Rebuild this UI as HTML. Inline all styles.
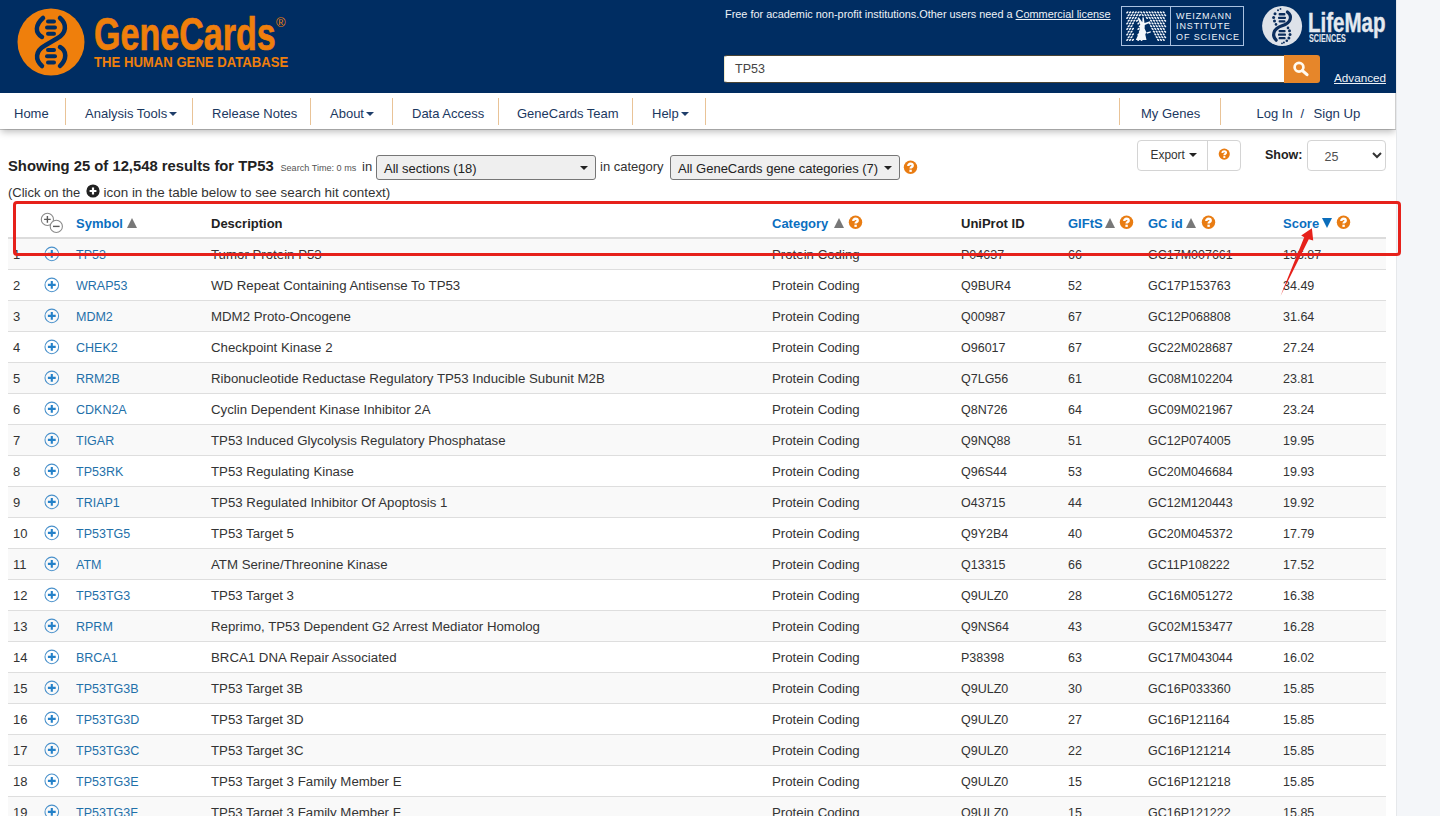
<!DOCTYPE html>
<html><head><meta charset="utf-8">
<style>
*{margin:0;padding:0;box-sizing:border-box}
html,body{width:1440px;height:816px;overflow:hidden;background:#f4f6f9;font-family:"Liberation Sans",sans-serif;color:#333}
.abs{position:absolute}
#page{position:absolute;left:0;top:0;width:1397px;height:816px;background:#fff;border-right:1px solid #e6e8eb;overflow:hidden}
#hdr{position:absolute;left:0;top:0;width:1396px;height:93px;background:#002d62}
.t{position:absolute;white-space:pre;line-height:1}
#nav{position:absolute;left:0;top:93px;width:1396px;height:36px;background:#fff;border-right:1px solid #cfcfcf;box-shadow:0 1px 0 rgba(0,0,0,.2),0 4px 7px -1px rgba(0,0,0,.26)}
.nv{position:absolute;font-size:13px;color:#1b385f;white-space:pre;line-height:1;top:14px}
.sep{position:absolute;top:5px;width:1px;height:27px;background:#e9c397}
.caret{display:inline-block;width:0;height:0;border-left:4px solid transparent;border-right:4px solid transparent;border-top:4px solid #1f3e6a;vertical-align:middle;margin-left:2px;position:relative;top:-1px}
.sel{position:absolute;background:#efefef;border:1px solid #767676;border-radius:3px}
.help{position:absolute;width:13px;height:13px;border-radius:50%;background:#e8831f}
.row{position:absolute;left:8px;width:1378px;height:31px;border-bottom:1px solid #dedede}
.row.odd{background:#f9f9f9}
.c{position:absolute;font-size:13px;white-space:pre;line-height:1;top:9px;color:#333}
.lnk{color:#1f70a9}
.d{font-size:13.25px;top:9.2px}
.n{font-size:12.5px;top:10px}
.th{position:absolute;font-size:13px;font-weight:bold;white-space:pre;line-height:1;top:217px;color:#222}
.thl{color:#0b6fbf}
.pl{position:absolute;left:36px;top:7px}
.tri{position:absolute;width:0;height:0;border-left:5.8px solid transparent;border-right:5.8px solid transparent}
</style></head><body>
<svg width="0" height="0" style="position:absolute"><defs>
<symbol id="help" viewBox="0 0 15 15"><circle cx="7.5" cy="7.3" r="6.7" fill="#e97c12"/><path d="M5.3 5.9C5.3 4.5 6.3 3.8 7.5 3.8C8.8 3.8 9.7 4.5 9.7 5.7C9.7 7.1 7.6 7.1 7.6 8.6" fill="none" stroke="#fff" stroke-width="2.4"/><rect x="6.4" y="9.7" width="2.4" height="2.2" fill="#fff"/></symbol>
<symbol id="plus" viewBox="0 0 16 16"><circle cx="7.8" cy="7.9" r="6.8" fill="none" stroke="#4a91cb" stroke-width="1.05"/><path d="M7.8 4V11.8M3.9 7.9H11.7" stroke="#2481c9" stroke-width="2.1"/></symbol>
</defs></svg>
<div id="page">
  <div id="hdr">
    <!-- GeneCards logo -->
    <svg class="abs" style="left:0;top:0" width="300" height="92">
      <circle cx="51" cy="42" r="33.5" fill="#ef7f0c"/>
      <g fill="none" stroke="#002d62" stroke-width="4.5" stroke-linecap="round">
        <path d="M60 18 C 67 24, 67 33, 57 38.5 L 45 45.5 C 35 51, 35 60, 42 66"/>
        <path d="M43 18 C 35 25, 35 33, 42 37"/>
        <path d="M60 47 C 67 51, 67 59, 60 66"/>
      </g>
      <g fill="#002d62">
        <rect x="46" y="19.5" width="10" height="4" rx="2"/>
        <rect x="45" y="25.6" width="12" height="4" rx="2"/>
        <rect x="46" y="31.8" width="10" height="4" rx="2"/>
        <rect x="46" y="48" width="10" height="4" rx="2"/>
        <rect x="45" y="54.2" width="12" height="4" rx="2"/>
        <rect x="46" y="60.5" width="10" height="4" rx="2"/>
      </g>
    </svg>
    <div class="t" style="left:94px;top:10px;font-size:47px;font-weight:bold;color:#ef7f0c;transform:scaleX(0.725);transform-origin:0 0;-webkit-text-stroke:0.7px #ef7f0c">GeneCards</div>
    <div class="t" style="left:276px;top:16px;font-size:13px;color:#ef7f0c">®</div>
    <div class="t" style="left:94px;top:54px;font-size:15.5px;font-weight:bold;color:#ef7f0c;transform:scaleX(0.847);transform-origin:0 0">THE HUMAN GENE DATABASE</div>

    <div class="t" style="left:725px;top:9px;font-size:10.9px;color:#eef2f7">Free for academic non-profit institutions.Other users need a <u>Commercial license</u></div>

    <!-- Weizmann -->
    <svg class="abs" style="left:1122px;top:7px" width="48" height="38"><g fill="#f4f7fb"><ellipse cx="5.3" cy="5.3" rx="1.35" ry="0.8" transform="rotate(-40 5.3 5.3)"/><ellipse cx="8.1" cy="5.3" rx="1.35" ry="0.8" transform="rotate(-40 8.1 5.3)"/><ellipse cx="10.9" cy="5.3" rx="1.35" ry="0.8" transform="rotate(-40 10.9 5.3)"/><ellipse cx="13.7" cy="5.3" rx="1.35" ry="0.8" transform="rotate(-40 13.7 5.3)"/><ellipse cx="16.5" cy="5.3" rx="1.35" ry="0.8" transform="rotate(-40 16.5 5.3)"/><ellipse cx="19.3" cy="5.3" rx="1.35" ry="0.8" transform="rotate(40 19.3 5.3)"/><ellipse cx="22.1" cy="5.3" rx="1.35" ry="0.8" transform="rotate(40 22.1 5.3)"/><ellipse cx="24.9" cy="5.3" rx="1.35" ry="0.8" transform="rotate(40 24.9 5.3)"/><ellipse cx="27.7" cy="5.3" rx="1.35" ry="0.8" transform="rotate(40 27.7 5.3)"/><ellipse cx="30.5" cy="5.3" rx="1.35" ry="0.8" transform="rotate(40 30.5 5.3)"/><ellipse cx="33.3" cy="5.3" rx="1.35" ry="0.8" transform="rotate(40 33.3 5.3)"/><ellipse cx="36.1" cy="5.3" rx="1.35" ry="0.8" transform="rotate(40 36.1 5.3)"/><ellipse cx="38.9" cy="5.3" rx="1.35" ry="0.8" transform="rotate(40 38.9 5.3)"/><ellipse cx="41.7" cy="5.3" rx="1.35" ry="0.8" transform="rotate(40 41.7 5.3)"/><ellipse cx="6.7" cy="8.1" rx="1.35" ry="0.8" transform="rotate(-40 6.7 8.1)"/><ellipse cx="9.5" cy="8.1" rx="1.35" ry="0.8" transform="rotate(-40 9.5 8.1)"/><ellipse cx="12.3" cy="8.1" rx="1.35" ry="0.8" transform="rotate(-40 12.3 8.1)"/><ellipse cx="15.1" cy="8.1" rx="1.35" ry="0.8" transform="rotate(-40 15.1 8.1)"/><ellipse cx="17.9" cy="8.1" rx="1.35" ry="0.8" transform="rotate(-40 17.9 8.1)"/><ellipse cx="20.7" cy="8.1" rx="1.35" ry="0.8" transform="rotate(40 20.7 8.1)"/><ellipse cx="23.5" cy="8.1" rx="1.35" ry="0.8" transform="rotate(40 23.5 8.1)"/><ellipse cx="26.3" cy="8.1" rx="1.35" ry="0.8" transform="rotate(40 26.3 8.1)"/><ellipse cx="29.1" cy="8.1" rx="1.35" ry="0.8" transform="rotate(40 29.1 8.1)"/><ellipse cx="31.9" cy="8.1" rx="1.35" ry="0.8" transform="rotate(40 31.9 8.1)"/><ellipse cx="34.7" cy="8.1" rx="1.35" ry="0.8" transform="rotate(40 34.7 8.1)"/><ellipse cx="37.5" cy="8.1" rx="1.35" ry="0.8" transform="rotate(40 37.5 8.1)"/><ellipse cx="40.3" cy="8.1" rx="1.35" ry="0.8" transform="rotate(40 40.3 8.1)"/><ellipse cx="43.1" cy="8.1" rx="1.35" ry="0.8" transform="rotate(40 43.1 8.1)"/><ellipse cx="5.3" cy="10.8" rx="1.35" ry="0.8" transform="rotate(-40 5.3 10.8)"/><ellipse cx="8.1" cy="10.8" rx="1.35" ry="0.8" transform="rotate(-40 8.1 10.8)"/><ellipse cx="10.9" cy="10.8" rx="1.35" ry="0.8" transform="rotate(-40 10.9 10.8)"/><ellipse cx="13.7" cy="10.8" rx="1.35" ry="0.8" transform="rotate(-40 13.7 10.8)"/><ellipse cx="24.9" cy="10.8" rx="1.35" ry="0.8" transform="rotate(40 24.9 10.8)"/><ellipse cx="27.7" cy="10.8" rx="1.35" ry="0.8" transform="rotate(40 27.7 10.8)"/><ellipse cx="30.5" cy="10.8" rx="1.35" ry="0.8" transform="rotate(40 30.5 10.8)"/><ellipse cx="33.3" cy="10.8" rx="1.35" ry="0.8" transform="rotate(40 33.3 10.8)"/><ellipse cx="36.1" cy="10.8" rx="1.35" ry="0.8" transform="rotate(40 36.1 10.8)"/><ellipse cx="38.9" cy="10.8" rx="1.35" ry="0.8" transform="rotate(40 38.9 10.8)"/><ellipse cx="41.7" cy="10.8" rx="1.35" ry="0.8" transform="rotate(40 41.7 10.8)"/><ellipse cx="6.7" cy="13.6" rx="1.35" ry="0.8" transform="rotate(-40 6.7 13.6)"/><ellipse cx="9.5" cy="13.6" rx="1.35" ry="0.8" transform="rotate(-40 9.5 13.6)"/><ellipse cx="12.3" cy="13.6" rx="1.35" ry="0.8" transform="rotate(-40 12.3 13.6)"/><ellipse cx="15.1" cy="13.6" rx="1.35" ry="0.8" transform="rotate(-40 15.1 13.6)"/><ellipse cx="29.1" cy="13.6" rx="1.35" ry="0.8" transform="rotate(40 29.1 13.6)"/><ellipse cx="31.9" cy="13.6" rx="1.35" ry="0.8" transform="rotate(40 31.9 13.6)"/><ellipse cx="34.7" cy="13.6" rx="1.35" ry="0.8" transform="rotate(40 34.7 13.6)"/><ellipse cx="37.5" cy="13.6" rx="1.35" ry="0.8" transform="rotate(40 37.5 13.6)"/><ellipse cx="40.3" cy="13.6" rx="1.35" ry="0.8" transform="rotate(40 40.3 13.6)"/><ellipse cx="43.1" cy="13.6" rx="1.35" ry="0.8" transform="rotate(40 43.1 13.6)"/><ellipse cx="5.3" cy="16.3" rx="1.35" ry="0.8" transform="rotate(-40 5.3 16.3)"/><ellipse cx="8.1" cy="16.3" rx="1.35" ry="0.8" transform="rotate(-40 8.1 16.3)"/><ellipse cx="10.9" cy="16.3" rx="1.35" ry="0.8" transform="rotate(-40 10.9 16.3)"/><ellipse cx="16.5" cy="16.3" rx="1.35" ry="0.8" transform="rotate(-40 16.5 16.3)"/><ellipse cx="19.3" cy="16.3" rx="1.35" ry="0.8" transform="rotate(40 19.3 16.3)"/><ellipse cx="27.7" cy="16.3" rx="1.35" ry="0.8" transform="rotate(40 27.7 16.3)"/><ellipse cx="30.5" cy="16.3" rx="1.35" ry="0.8" transform="rotate(40 30.5 16.3)"/><ellipse cx="33.3" cy="16.3" rx="1.35" ry="0.8" transform="rotate(40 33.3 16.3)"/><ellipse cx="36.1" cy="16.3" rx="1.35" ry="0.8" transform="rotate(40 36.1 16.3)"/><ellipse cx="38.9" cy="16.3" rx="1.35" ry="0.8" transform="rotate(40 38.9 16.3)"/><ellipse cx="41.7" cy="16.3" rx="1.35" ry="0.8" transform="rotate(40 41.7 16.3)"/><ellipse cx="6.7" cy="19.1" rx="1.35" ry="0.8" transform="rotate(-40 6.7 19.1)"/><ellipse cx="9.5" cy="19.1" rx="1.35" ry="0.8" transform="rotate(-40 9.5 19.1)"/><ellipse cx="17.9" cy="19.1" rx="1.35" ry="0.8" transform="rotate(-40 17.9 19.1)"/><ellipse cx="20.7" cy="19.1" rx="1.35" ry="0.8" transform="rotate(40 20.7 19.1)"/><ellipse cx="29.1" cy="19.1" rx="1.35" ry="0.8" transform="rotate(40 29.1 19.1)"/><ellipse cx="31.9" cy="19.1" rx="1.35" ry="0.8" transform="rotate(40 31.9 19.1)"/><ellipse cx="34.7" cy="19.1" rx="1.35" ry="0.8" transform="rotate(40 34.7 19.1)"/><ellipse cx="37.5" cy="19.1" rx="1.35" ry="0.8" transform="rotate(40 37.5 19.1)"/><ellipse cx="40.3" cy="19.1" rx="1.35" ry="0.8" transform="rotate(40 40.3 19.1)"/><ellipse cx="43.1" cy="19.1" rx="1.35" ry="0.8" transform="rotate(40 43.1 19.1)"/><ellipse cx="5.3" cy="21.8" rx="1.35" ry="0.8" transform="rotate(-40 5.3 21.8)"/><ellipse cx="8.1" cy="21.8" rx="1.35" ry="0.8" transform="rotate(-40 8.1 21.8)"/><ellipse cx="10.9" cy="21.8" rx="1.35" ry="0.8" transform="rotate(-40 10.9 21.8)"/><ellipse cx="16.5" cy="21.8" rx="1.35" ry="0.8" transform="rotate(-40 16.5 21.8)"/><ellipse cx="19.3" cy="21.8" rx="1.35" ry="0.8" transform="rotate(40 19.3 21.8)"/><ellipse cx="30.5" cy="21.8" rx="1.35" ry="0.8" transform="rotate(40 30.5 21.8)"/><ellipse cx="33.3" cy="21.8" rx="1.35" ry="0.8" transform="rotate(40 33.3 21.8)"/><ellipse cx="36.1" cy="21.8" rx="1.35" ry="0.8" transform="rotate(40 36.1 21.8)"/><ellipse cx="38.9" cy="21.8" rx="1.35" ry="0.8" transform="rotate(40 38.9 21.8)"/><ellipse cx="41.7" cy="21.8" rx="1.35" ry="0.8" transform="rotate(40 41.7 21.8)"/><ellipse cx="6.7" cy="24.6" rx="1.35" ry="0.8" transform="rotate(-40 6.7 24.6)"/><ellipse cx="9.5" cy="24.6" rx="1.35" ry="0.8" transform="rotate(-40 9.5 24.6)"/><ellipse cx="17.9" cy="24.6" rx="1.35" ry="0.8" transform="rotate(-40 17.9 24.6)"/><ellipse cx="20.7" cy="24.6" rx="1.35" ry="0.8" transform="rotate(40 20.7 24.6)"/><ellipse cx="31.9" cy="24.6" rx="1.35" ry="0.8" transform="rotate(40 31.9 24.6)"/><ellipse cx="34.7" cy="24.6" rx="1.35" ry="0.8" transform="rotate(40 34.7 24.6)"/><ellipse cx="37.5" cy="24.6" rx="1.35" ry="0.8" transform="rotate(40 37.5 24.6)"/><ellipse cx="40.3" cy="24.6" rx="1.35" ry="0.8" transform="rotate(40 40.3 24.6)"/><ellipse cx="43.1" cy="24.6" rx="1.35" ry="0.8" transform="rotate(40 43.1 24.6)"/><ellipse cx="5.3" cy="27.3" rx="1.35" ry="0.8" transform="rotate(-40 5.3 27.3)"/><ellipse cx="8.1" cy="27.3" rx="1.35" ry="0.8" transform="rotate(-40 8.1 27.3)"/><ellipse cx="10.9" cy="27.3" rx="1.35" ry="0.8" transform="rotate(-40 10.9 27.3)"/><ellipse cx="16.5" cy="27.3" rx="1.35" ry="0.8" transform="rotate(-40 16.5 27.3)"/><ellipse cx="19.3" cy="27.3" rx="1.35" ry="0.8" transform="rotate(40 19.3 27.3)"/><ellipse cx="33.3" cy="27.3" rx="1.35" ry="0.8" transform="rotate(40 33.3 27.3)"/><ellipse cx="36.1" cy="27.3" rx="1.35" ry="0.8" transform="rotate(40 36.1 27.3)"/><ellipse cx="38.9" cy="27.3" rx="1.35" ry="0.8" transform="rotate(40 38.9 27.3)"/><ellipse cx="41.7" cy="27.3" rx="1.35" ry="0.8" transform="rotate(40 41.7 27.3)"/><ellipse cx="6.7" cy="30.1" rx="1.35" ry="0.8" transform="rotate(-40 6.7 30.1)"/><ellipse cx="9.5" cy="30.1" rx="1.35" ry="0.8" transform="rotate(-40 9.5 30.1)"/><ellipse cx="17.9" cy="30.1" rx="1.35" ry="0.8" transform="rotate(-40 17.9 30.1)"/><ellipse cx="20.7" cy="30.1" rx="1.35" ry="0.8" transform="rotate(40 20.7 30.1)"/><ellipse cx="34.7" cy="30.1" rx="1.35" ry="0.8" transform="rotate(40 34.7 30.1)"/><ellipse cx="37.5" cy="30.1" rx="1.35" ry="0.8" transform="rotate(40 37.5 30.1)"/><ellipse cx="40.3" cy="30.1" rx="1.35" ry="0.8" transform="rotate(40 40.3 30.1)"/><ellipse cx="43.1" cy="30.1" rx="1.35" ry="0.8" transform="rotate(40 43.1 30.1)"/><ellipse cx="5.3" cy="32.8" rx="1.35" ry="0.8" transform="rotate(-40 5.3 32.8)"/><ellipse cx="8.1" cy="32.8" rx="1.35" ry="0.8" transform="rotate(-40 8.1 32.8)"/><ellipse cx="10.9" cy="32.8" rx="1.35" ry="0.8" transform="rotate(-40 10.9 32.8)"/><ellipse cx="16.5" cy="32.8" rx="1.35" ry="0.8" transform="rotate(-40 16.5 32.8)"/><ellipse cx="19.3" cy="32.8" rx="1.35" ry="0.8" transform="rotate(40 19.3 32.8)"/><ellipse cx="36.1" cy="32.8" rx="1.35" ry="0.8" transform="rotate(40 36.1 32.8)"/><ellipse cx="38.9" cy="32.8" rx="1.35" ry="0.8" transform="rotate(40 38.9 32.8)"/><ellipse cx="41.7" cy="32.8" rx="1.35" ry="0.8" transform="rotate(40 41.7 32.8)"/><path d="M13.8 33 L24.5 33 L23.3 27.5 L24.2 25.6 L28.8 24.2 L28.8 25.6 L25 26.8 L22.6 21.5 L22.8 18 L28.5 15.6 L28 14.3 L22.5 16 L21.8 10.5 L20.5 10.2 L20.3 15.2 L16.8 10.3 L15.6 11 L18.2 17.5 L17.2 25.5 Z"/></g></svg>
    <div class="abs" style="left:1121px;top:6px;width:123px;height:40px;border:1px solid #a9c1e0"></div>
    <div class="abs" style="left:1170px;top:6px;width:1px;height:40px;background:#a9c1e0"></div>
    <div class="t" style="left:1176px;top:10.5px;font-size:9px;color:#eef3fa;letter-spacing:0.9px;line-height:10.5px">WEIZMANN<br>INSTITUTE<br>OF SCIENCE</div>

    <!-- LifeMap -->
    <svg class="abs" style="left:1258px;top:2px" width="48" height="48">
      <circle cx="24.1" cy="24.1" r="20" fill="#dde2e9"/>
      <path d="M29.4 10 C 34.5 14, 33.5 20.5, 24 23.8 C 14.5 27, 14 34, 18.2 38.2" fill="none" stroke="#0b2d5c" stroke-width="3.2" stroke-linecap="round"/>
      <g fill="#0b2d5c">
        <circle cx="17" cy="11.8" r="1.50"/><circle cx="15.6" cy="15.6" r="1.50"/><circle cx="16.5" cy="19.1" r="1.50"/><circle cx="18" cy="22.4" r="1.30"/>
        <circle cx="20" cy="8.2" r="1.00"/><circle cx="22.5" cy="6.9" r="0.90"/>
        <circle cx="30" cy="25.9" r="1.30"/><circle cx="31.5" cy="28.8" r="1.50"/><circle cx="32" cy="32.4" r="1.50"/><circle cx="30.9" cy="35.9" r="1.50"/><circle cx="28.8" cy="38.8" r="1.30"/>
        <circle cx="25.9" cy="40.6" r="1.00"/><circle cx="24" cy="41.3" r="0.90"/>
        <rect x="20.6" y="11.1" width="6.8" height="2.3" rx="0.9"/><rect x="20" y="14.7" width="8" height="2.3" rx="0.9"/><rect x="20.6" y="18.2" width="6.8" height="2.3" rx="0.9"/>
        <rect x="20.6" y="27.9" width="7" height="2.3" rx="0.9"/><rect x="20" y="31.5" width="8" height="2.3" rx="0.9"/><rect x="20.6" y="35" width="7" height="2.3" rx="0.9"/>
      </g>
    </svg>
    <div class="t" style="left:1308px;top:10px;font-size:27px;font-weight:bold;color:#e4e9f0;transform:scaleX(0.76);transform-origin:0 0;-webkit-text-stroke:0.4px #e4e9f0">LifeMap</div>
    <div class="t" style="left:1309px;top:34px;font-size:10px;font-weight:bold;color:#e4e9f0;transform:scaleX(0.72);transform-origin:0 0">SCIENCES</div>

    <!-- search -->
    <div class="abs" style="left:724px;top:55px;width:561px;height:28px;background:#fff;border-radius:3px 0 0 3px;border:1px solid #4a4434;border-left-color:#f3e9c6;border-right:0"></div>
    <div class="t" style="left:735px;top:63px;font-size:12.5px;color:#444">TP53</div>
    <div class="abs" style="left:1284px;top:55px;width:36px;height:28px;background:#e6862a;border-radius:0 3px 3px 0"></div>
    <svg class="abs" style="left:1284px;top:55px" width="36" height="28"><circle cx="15" cy="12.2" r="4.4" fill="none" stroke="#fffaf0" stroke-width="2.7"/><path d="M18.4 15.6L23 19.6" stroke="#fffaf0" stroke-width="3.2" stroke-linecap="round"/></svg>
    <div class="t" style="left:1334px;top:72px;font-size:11.7px;color:#eef2f7"><u>Advanced</u></div>
  </div>


  <!-- results line -->
  <div class="t" style="left:8px;top:159px;font-size:14.8px;font-weight:bold;color:#222">Showing 25 of 12,548 results for TP53</div>
  <div class="t" style="left:280.5px;top:164px;font-size:9.1px;color:#555">Search Time: 0 ms</div>
  <div class="t" style="left:362px;top:160px;font-size:13px;color:#333">in</div>
  <div class="sel" style="left:376px;top:155px;width:220px;height:25px"></div>
  <div class="t" style="left:384px;top:162px;font-size:13px;color:#222">All sections (18)</div>
  <div class="tri" style="left:580px;top:166px;border-left-width:4px;border-right-width:4px;border-top:4px solid #222"></div>
  <div class="t" style="left:600px;top:160px;font-size:13px;color:#333">in category</div>
  <div class="sel" style="left:670px;top:155px;width:230px;height:25px"></div>
  <div class="t" style="left:678px;top:162px;font-size:13px;color:#222">All GeneCards gene categories (7)</div>
  <div class="tri" style="left:884px;top:166px;border-left-width:4px;border-right-width:4px;border-top:4px solid #222"></div>
  <svg class="abs" style="left:903px;top:160px" width="15" height="15"><use href="#help"/></svg>
  <div class="t" style="left:8px;top:186px;font-size:13px;color:#333">(Click on the</div><div class="t" style="left:103.5px;top:186px;font-size:13.45px;color:#333">icon in the table below to see search hit context)</div>
  <svg class="abs" style="left:86px;top:184px" width="14" height="14"><circle cx="7" cy="7" r="6.6" fill="#222"/><path d="M7 3.6V10.4M3.6 7H10.4" stroke="#fff" stroke-width="2.2"/></svg>

  <!-- export / show -->
  <div class="abs" style="left:1137px;top:140px;width:104px;height:31px;border:1px solid #d4d4d4;border-radius:4px;background:#fff"></div>
  <div class="abs" style="left:1207px;top:140px;width:1px;height:31px;background:#d4d4d4"></div>
  <div class="t" style="left:1150.5px;top:150px;font-size:11.9px;color:#333">Export<span class="caret" style="border-top-color:#222;margin-left:4px"></span></div>
  <svg class="abs" style="left:1218px;top:148px" width="12.5" height="12.5"><use href="#help"/></svg>
  <div class="t" style="left:1265px;top:149px;font-size:12.5px;font-weight:bold;color:#222">Show:</div>
  <div class="abs" style="left:1307px;top:140px;width:79px;height:31px;border:1px solid #d4d4d4;border-radius:4px;background:#fff"></div>
  <div class="t" style="left:1324.5px;top:151px;font-size:12.5px;color:#505050">25</div>
  <svg class="abs" style="left:1371px;top:150px" width="12" height="10"><path d="M2 3L6 7L10 3" fill="none" stroke="#333" stroke-width="2"/></svg>

  <!-- table header -->
  <svg class="abs" style="left:38px;top:210px" width="28" height="24">
    <circle cx="9.4" cy="9.4" r="6.1" fill="none" stroke="#8a8a8a" stroke-width="1.1"/>
    <path d="M6.1 9.4H12.7M9.4 6.1V12.7" stroke="#5a5a5a" stroke-width="1.4"/>
    <circle cx="18.3" cy="16.4" r="6.1" fill="#fff" stroke="#8a8a8a" stroke-width="1.1"/>
    <path d="M15 16.4H21.6" stroke="#5a5a5a" stroke-width="1.4"/>
  </svg>
  <div class="th thl" style="left:76px">Symbol</div>
  <div class="tri" style="left:127px;top:218px;border-bottom:10px solid #787878"></div>
  <div class="th" style="left:211px">Description</div>
  <div class="th thl" style="left:772px">Category</div>
  <div class="tri" style="left:834px;top:218px;border-bottom:10px solid #787878"></div>
  <svg class="abs" style="left:848px;top:215px" width="15" height="15"><use href="#help"/></svg>
  <div class="th" style="left:961px">UniProt ID</div>
  <div class="th thl" style="left:1068px">GIFtS</div>
  <div class="tri" style="left:1105px;top:218px;border-bottom:10px solid #787878"></div>
  <svg class="abs" style="left:1119px;top:215px" width="15" height="15"><use href="#help"/></svg>
  <div class="th thl" style="left:1148px">GC id</div>
  <div class="tri" style="left:1186px;top:218px;border-bottom:10px solid #787878"></div>
  <svg class="abs" style="left:1201px;top:215px" width="15" height="15"><use href="#help"/></svg>
  <div class="th thl" style="left:1283px">Score</div>
  <div class="tri" style="left:1322px;top:218px;border-top:10px solid #0b6dbb"></div>
  <svg class="abs" style="left:1336px;top:215px" width="15" height="15"><use href="#help"/></svg>
  <div class="abs" style="left:8px;top:237px;width:1378px;height:2px;background:#dcdcdc"></div>

  <!-- rows -->
<div class="row odd" style="top:239px"><div class="c" style="left:5px">1</div><svg class="pl" width="16" height="16"><use href="#plus"/></svg><div class="c n lnk" style="left:68px">TP53</div><div class="c d" style="left:203px">Tumor Protein P53</div><div class="c d" style="left:764px">Protein Coding</div><div class="c n" style="left:953px">P04637</div><div class="c n" style="left:1060px">66</div><div class="c n" style="left:1140px">GC17M007661</div><div class="c n" style="left:1275px">136.87</div></div>
<div class="row" style="top:270px"><div class="c" style="left:5px">2</div><svg class="pl" width="16" height="16"><use href="#plus"/></svg><div class="c n lnk" style="left:68px">WRAP53</div><div class="c d" style="left:203px">WD Repeat Containing Antisense To TP53</div><div class="c d" style="left:764px">Protein Coding</div><div class="c n" style="left:953px">Q9BUR4</div><div class="c n" style="left:1060px">52</div><div class="c n" style="left:1140px">GC17P153763</div><div class="c n" style="left:1275px">34.49</div></div>
<div class="row odd" style="top:301px"><div class="c" style="left:5px">3</div><svg class="pl" width="16" height="16"><use href="#plus"/></svg><div class="c n lnk" style="left:68px">MDM2</div><div class="c d" style="left:203px">MDM2 Proto-Oncogene</div><div class="c d" style="left:764px">Protein Coding</div><div class="c n" style="left:953px">Q00987</div><div class="c n" style="left:1060px">67</div><div class="c n" style="left:1140px">GC12P068808</div><div class="c n" style="left:1275px">31.64</div></div>
<div class="row" style="top:332px"><div class="c" style="left:5px">4</div><svg class="pl" width="16" height="16"><use href="#plus"/></svg><div class="c n lnk" style="left:68px">CHEK2</div><div class="c d" style="left:203px">Checkpoint Kinase 2</div><div class="c d" style="left:764px">Protein Coding</div><div class="c n" style="left:953px">O96017</div><div class="c n" style="left:1060px">67</div><div class="c n" style="left:1140px">GC22M028687</div><div class="c n" style="left:1275px">27.24</div></div>
<div class="row odd" style="top:363px"><div class="c" style="left:5px">5</div><svg class="pl" width="16" height="16"><use href="#plus"/></svg><div class="c n lnk" style="left:68px">RRM2B</div><div class="c d" style="left:203px">Ribonucleotide Reductase Regulatory TP53 Inducible Subunit M2B</div><div class="c d" style="left:764px">Protein Coding</div><div class="c n" style="left:953px">Q7LG56</div><div class="c n" style="left:1060px">61</div><div class="c n" style="left:1140px">GC08M102204</div><div class="c n" style="left:1275px">23.81</div></div>
<div class="row" style="top:394px"><div class="c" style="left:5px">6</div><svg class="pl" width="16" height="16"><use href="#plus"/></svg><div class="c n lnk" style="left:68px">CDKN2A</div><div class="c d" style="left:203px">Cyclin Dependent Kinase Inhibitor 2A</div><div class="c d" style="left:764px">Protein Coding</div><div class="c n" style="left:953px">Q8N726</div><div class="c n" style="left:1060px">64</div><div class="c n" style="left:1140px">GC09M021967</div><div class="c n" style="left:1275px">23.24</div></div>
<div class="row odd" style="top:425px"><div class="c" style="left:5px">7</div><svg class="pl" width="16" height="16"><use href="#plus"/></svg><div class="c n lnk" style="left:68px">TIGAR</div><div class="c d" style="left:203px">TP53 Induced Glycolysis Regulatory Phosphatase</div><div class="c d" style="left:764px">Protein Coding</div><div class="c n" style="left:953px">Q9NQ88</div><div class="c n" style="left:1060px">51</div><div class="c n" style="left:1140px">GC12P074005</div><div class="c n" style="left:1275px">19.95</div></div>
<div class="row" style="top:456px"><div class="c" style="left:5px">8</div><svg class="pl" width="16" height="16"><use href="#plus"/></svg><div class="c n lnk" style="left:68px">TP53RK</div><div class="c d" style="left:203px">TP53 Regulating Kinase</div><div class="c d" style="left:764px">Protein Coding</div><div class="c n" style="left:953px">Q96S44</div><div class="c n" style="left:1060px">53</div><div class="c n" style="left:1140px">GC20M046684</div><div class="c n" style="left:1275px">19.93</div></div>
<div class="row odd" style="top:487px"><div class="c" style="left:5px">9</div><svg class="pl" width="16" height="16"><use href="#plus"/></svg><div class="c n lnk" style="left:68px">TRIAP1</div><div class="c d" style="left:203px">TP53 Regulated Inhibitor Of Apoptosis 1</div><div class="c d" style="left:764px">Protein Coding</div><div class="c n" style="left:953px">O43715</div><div class="c n" style="left:1060px">44</div><div class="c n" style="left:1140px">GC12M120443</div><div class="c n" style="left:1275px">19.92</div></div>
<div class="row" style="top:518px"><div class="c" style="left:5px">10</div><svg class="pl" width="16" height="16"><use href="#plus"/></svg><div class="c n lnk" style="left:68px">TP53TG5</div><div class="c d" style="left:203px">TP53 Target 5</div><div class="c d" style="left:764px">Protein Coding</div><div class="c n" style="left:953px">Q9Y2B4</div><div class="c n" style="left:1060px">40</div><div class="c n" style="left:1140px">GC20M045372</div><div class="c n" style="left:1275px">17.79</div></div>
<div class="row odd" style="top:549px"><div class="c" style="left:5px">11</div><svg class="pl" width="16" height="16"><use href="#plus"/></svg><div class="c n lnk" style="left:68px">ATM</div><div class="c d" style="left:203px">ATM Serine/Threonine Kinase</div><div class="c d" style="left:764px">Protein Coding</div><div class="c n" style="left:953px">Q13315</div><div class="c n" style="left:1060px">66</div><div class="c n" style="left:1140px">GC11P108222</div><div class="c n" style="left:1275px">17.52</div></div>
<div class="row" style="top:580px"><div class="c" style="left:5px">12</div><svg class="pl" width="16" height="16"><use href="#plus"/></svg><div class="c n lnk" style="left:68px">TP53TG3</div><div class="c d" style="left:203px">TP53 Target 3</div><div class="c d" style="left:764px">Protein Coding</div><div class="c n" style="left:953px">Q9ULZ0</div><div class="c n" style="left:1060px">28</div><div class="c n" style="left:1140px">GC16M051272</div><div class="c n" style="left:1275px">16.38</div></div>
<div class="row odd" style="top:611px"><div class="c" style="left:5px">13</div><svg class="pl" width="16" height="16"><use href="#plus"/></svg><div class="c n lnk" style="left:68px">RPRM</div><div class="c d" style="left:203px">Reprimo, TP53 Dependent G2 Arrest Mediator Homolog</div><div class="c d" style="left:764px">Protein Coding</div><div class="c n" style="left:953px">Q9NS64</div><div class="c n" style="left:1060px">43</div><div class="c n" style="left:1140px">GC02M153477</div><div class="c n" style="left:1275px">16.28</div></div>
<div class="row" style="top:642px"><div class="c" style="left:5px">14</div><svg class="pl" width="16" height="16"><use href="#plus"/></svg><div class="c n lnk" style="left:68px">BRCA1</div><div class="c d" style="left:203px">BRCA1 DNA Repair Associated</div><div class="c d" style="left:764px">Protein Coding</div><div class="c n" style="left:953px">P38398</div><div class="c n" style="left:1060px">63</div><div class="c n" style="left:1140px">GC17M043044</div><div class="c n" style="left:1275px">16.02</div></div>
<div class="row odd" style="top:673px"><div class="c" style="left:5px">15</div><svg class="pl" width="16" height="16"><use href="#plus"/></svg><div class="c n lnk" style="left:68px">TP53TG3B</div><div class="c d" style="left:203px">TP53 Target 3B</div><div class="c d" style="left:764px">Protein Coding</div><div class="c n" style="left:953px">Q9ULZ0</div><div class="c n" style="left:1060px">30</div><div class="c n" style="left:1140px">GC16P033360</div><div class="c n" style="left:1275px">15.85</div></div>
<div class="row" style="top:704px"><div class="c" style="left:5px">16</div><svg class="pl" width="16" height="16"><use href="#plus"/></svg><div class="c n lnk" style="left:68px">TP53TG3D</div><div class="c d" style="left:203px">TP53 Target 3D</div><div class="c d" style="left:764px">Protein Coding</div><div class="c n" style="left:953px">Q9ULZ0</div><div class="c n" style="left:1060px">27</div><div class="c n" style="left:1140px">GC16P121164</div><div class="c n" style="left:1275px">15.85</div></div>
<div class="row odd" style="top:735px"><div class="c" style="left:5px">17</div><svg class="pl" width="16" height="16"><use href="#plus"/></svg><div class="c n lnk" style="left:68px">TP53TG3C</div><div class="c d" style="left:203px">TP53 Target 3C</div><div class="c d" style="left:764px">Protein Coding</div><div class="c n" style="left:953px">Q9ULZ0</div><div class="c n" style="left:1060px">22</div><div class="c n" style="left:1140px">GC16P121214</div><div class="c n" style="left:1275px">15.85</div></div>
<div class="row" style="top:766px"><div class="c" style="left:5px">18</div><svg class="pl" width="16" height="16"><use href="#plus"/></svg><div class="c n lnk" style="left:68px">TP53TG3E</div><div class="c d" style="left:203px">TP53 Target 3 Family Member E</div><div class="c d" style="left:764px">Protein Coding</div><div class="c n" style="left:953px">Q9ULZ0</div><div class="c n" style="left:1060px">15</div><div class="c n" style="left:1140px">GC16P121218</div><div class="c n" style="left:1275px">15.85</div></div>
<div class="row odd" style="top:797px"><div class="c" style="left:5px">19</div><svg class="pl" width="16" height="16"><use href="#plus"/></svg><div class="c n lnk" style="left:68px">TP53TG3F</div><div class="c d" style="left:203px">TP53 Target 3 Family Member F</div><div class="c d" style="left:764px">Protein Coding</div><div class="c n" style="left:953px">Q9ULZ0</div><div class="c n" style="left:1060px">15</div><div class="c n" style="left:1140px">GC16P121222</div><div class="c n" style="left:1275px">15.85</div></div>


  <div id="nav">
    <div class="nv" style="left:14px">Home</div>
    <div class="sep" style="left:65px"></div>
    <div class="nv" style="left:85px">Analysis Tools<span class="caret"></span></div>
    <div class="sep" style="left:192px"></div>
    <div class="nv" style="left:212px">Release Notes</div>
    <div class="sep" style="left:310px"></div>
    <div class="nv" style="left:330px">About<span class="caret"></span></div>
    <div class="sep" style="left:392px"></div>
    <div class="nv" style="left:412px">Data Access</div>
    <div class="sep" style="left:498px"></div>
    <div class="nv" style="left:517px">GeneCards Team</div>
    <div class="sep" style="left:632px"></div>
    <div class="nv" style="left:652px">Help<span class="caret"></span></div>
    <div class="sep" style="left:705px"></div>
    <div class="sep" style="left:1119px"></div>
    <div class="nv" style="left:1141px">My Genes</div>
    <div class="sep" style="left:1220px"></div>
    <div class="nv" style="left:1256.5px">Log In</div><div class="nv" style="left:1300.5px">/</div><div class="nv" style="left:1313.5px;font-size:13.2px">Sign Up</div>
  </div>
</div>

  <!-- annotation -->
  <div class="abs" style="left:13px;top:201px;width:1388px;height:55px;border:3px solid #e6211b;border-radius:4px"></div>
  <svg class="abs" style="left:1270px;top:220px" width="60" height="90">
    <path d="M10.5 76 L34.2 17.2 L31.2 15.4 L41.9 8.3 L43.2 20.6 L38.8 19.2 Z" fill="#e6211b"/>
  </svg>
</body></html>
